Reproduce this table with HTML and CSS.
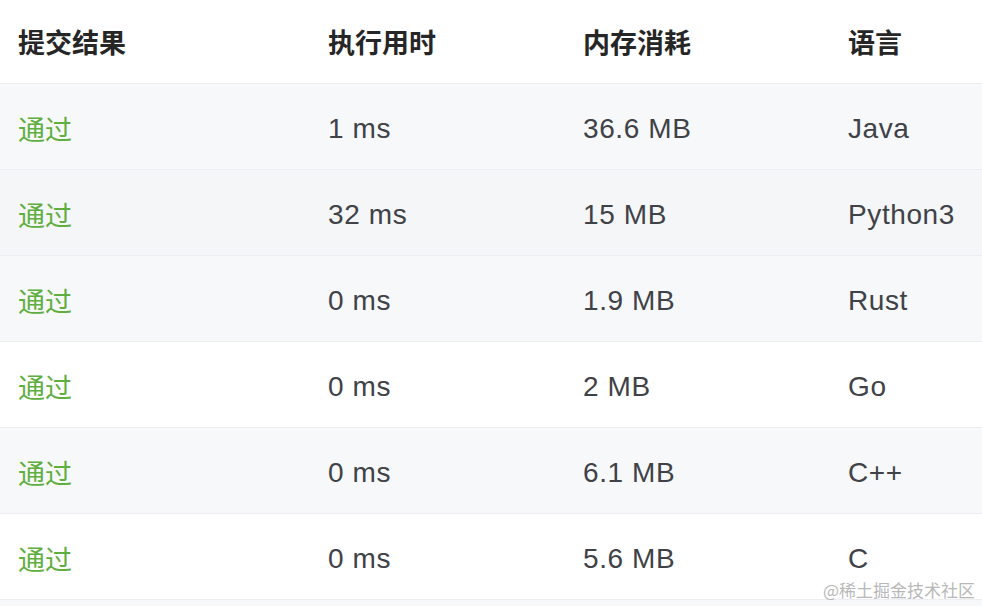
FILE: index.html
```html
<!DOCTYPE html>
<html lang="zh">
<head>
<meta charset="utf-8">
<link rel="stylesheet" href="styles.css">
</head>
<body>
<div class="table">
  <div class="row head">
    <div class="cell">提交结果</div>
    <div class="cell">执行用时</div>
    <div class="cell">内存消耗</div>
    <div class="cell">语言</div>
  </div>
  <div class="row odd">
    <div class="cell ok">通过</div>
    <div class="cell">1 ms</div>
    <div class="cell">36.6 MB</div>
    <div class="cell">Java</div>
  </div>
  <div class="row hover">
    <div class="cell ok">通过</div>
    <div class="cell">32 ms</div>
    <div class="cell">15 MB</div>
    <div class="cell">Python3</div>
  </div>
  <div class="row odd">
    <div class="cell ok">通过</div>
    <div class="cell">0 ms</div>
    <div class="cell">1.9 MB</div>
    <div class="cell">Rust</div>
  </div>
  <div class="row">
    <div class="cell ok">通过</div>
    <div class="cell">0 ms</div>
    <div class="cell">2 MB</div>
    <div class="cell">Go</div>
  </div>
  <div class="row odd">
    <div class="cell ok">通过</div>
    <div class="cell">0 ms</div>
    <div class="cell">6.1 MB</div>
    <div class="cell">C++</div>
  </div>
  <div class="row">
    <div class="cell ok">通过</div>
    <div class="cell">0 ms</div>
    <div class="cell">5.6 MB</div>
    <div class="cell">C</div>
  </div>
  <div class="row odd empty"></div>
</div>
<div class="watermark">@稀土掘金技术社区</div>
</body>
</html>
```

FILE: styles.css
```css
html, body {
  margin: 0;
  padding: 0;
  background: #ffffff;
  overflow: hidden;
}
body {
  width: 982px;
  height: 606px;
  position: relative;
  font-family: "Liberation Sans", "Noto Sans CJK SC", sans-serif;
  color: #3f4247;
}
.table {
  display: flex;
  flex-direction: column;
}
.row {
  display: grid;
  grid-template-columns: 310px 255px 265px 152px;
  height: 86px;
  box-sizing: border-box;
  padding-top: 4px;
  border-bottom: 1px solid #eceef1;
  align-items: center;
  font-size: 28px;
  letter-spacing: 0.6px;
}
.row.head {
  height: 84px;
  padding-top: 0;
  color: #262626;
  font-weight: 700;
  font-family: "Noto Sans CJK SC", sans-serif;
  font-size: 27px;
  letter-spacing: 0;
  border-bottom: 1px solid #eeeff1;
}
.row.odd {
  background: #f7f8fa;
}
.row.hover {
  background: #f5f6f7;
}
.row.empty {
  height: 20px;
  border-bottom: none;
}
.cell {
  padding-left: 18px;
  white-space: nowrap;
}
.cell.ok {
  color: #5fae40;
  font-family: "Noto Sans CJK SC", sans-serif;
  font-size: 27px;
  letter-spacing: 0;
}
.watermark {
  position: absolute;
  right: 7px;
  top: 577px;
  font-family: "Noto Sans CJK SC", sans-serif;
  font-size: 17px;
  color: #b8b8b8;
}
```
